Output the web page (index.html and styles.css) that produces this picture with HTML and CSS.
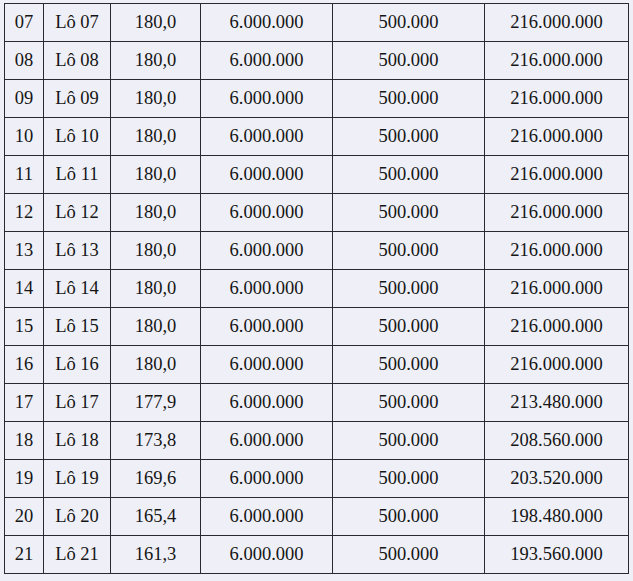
FILE: index.html
```html
<!DOCTYPE html>
<html lang="vi">
<head>
<meta charset="utf-8">
<title>Bảng giá lô đất</title>
<link rel="stylesheet" href="styles.css">
</head>
<body>
<div class="page">
<table class="lots">
<colgroup>
<col class="c-stt"><col class="c-lot"><col class="c-area"><col class="c-price"><col class="c-fee"><col class="c-total">
</colgroup>
<tbody>
<tr><td>07</td><td>Lô 07</td><td>180,0</td><td>6.000.000</td><td>500.000</td><td>216.000.000</td></tr>
<tr><td>08</td><td>Lô 08</td><td>180,0</td><td>6.000.000</td><td>500.000</td><td>216.000.000</td></tr>
<tr><td>09</td><td>Lô 09</td><td>180,0</td><td>6.000.000</td><td>500.000</td><td>216.000.000</td></tr>
<tr><td>10</td><td>Lô 10</td><td>180,0</td><td>6.000.000</td><td>500.000</td><td>216.000.000</td></tr>
<tr><td>11</td><td>Lô 11</td><td>180,0</td><td>6.000.000</td><td>500.000</td><td>216.000.000</td></tr>
<tr><td>12</td><td>Lô 12</td><td>180,0</td><td>6.000.000</td><td>500.000</td><td>216.000.000</td></tr>
<tr><td>13</td><td>Lô 13</td><td>180,0</td><td>6.000.000</td><td>500.000</td><td>216.000.000</td></tr>
<tr><td>14</td><td>Lô 14</td><td>180,0</td><td>6.000.000</td><td>500.000</td><td>216.000.000</td></tr>
<tr><td>15</td><td>Lô 15</td><td>180,0</td><td>6.000.000</td><td>500.000</td><td>216.000.000</td></tr>
<tr><td>16</td><td>Lô 16</td><td>180,0</td><td>6.000.000</td><td>500.000</td><td>216.000.000</td></tr>
<tr><td>17</td><td>Lô 17</td><td>177,9</td><td>6.000.000</td><td>500.000</td><td>213.480.000</td></tr>
<tr><td>18</td><td>Lô 18</td><td>173,8</td><td>6.000.000</td><td>500.000</td><td>208.560.000</td></tr>
<tr><td>19</td><td>Lô 19</td><td>169,6</td><td>6.000.000</td><td>500.000</td><td>203.520.000</td></tr>
<tr><td>20</td><td>Lô 20</td><td>165,4</td><td>6.000.000</td><td>500.000</td><td>198.480.000</td></tr>
<tr><td>21</td><td>Lô 21</td><td>161,3</td><td>6.000.000</td><td>500.000</td><td>193.560.000</td></tr>
</tbody>
</table>
</div>
</body>
</html>
```

FILE: styles.css
```css
html, body {
  margin: 0;
  padding: 0;
  background: #eff0f7;
}
.page {
  padding: 3px 0 0 4px;
  width: 633px;
  height: 581px;
  box-sizing: border-box;
  overflow: hidden;
}
.lots {
  border-collapse: collapse;
  table-layout: fixed;
  width: 624px;
  font-family: "Liberation Serif", "Times New Roman", serif;
  font-size: 18.5px;
  color: #151515;
}
.c-stt { width: 39px; }
.c-lot { width: 67px; }
.c-area { width: 90px; }
.c-price { width: 132px; }
.c-fee { width: 152px; }
.c-total { width: 144px; }
.lots td {
  border: 1px solid #2a2a2e;
  height: 37px;
  padding: 0;
  text-align: center;
  vertical-align: middle;
  line-height: 1;
}
```
